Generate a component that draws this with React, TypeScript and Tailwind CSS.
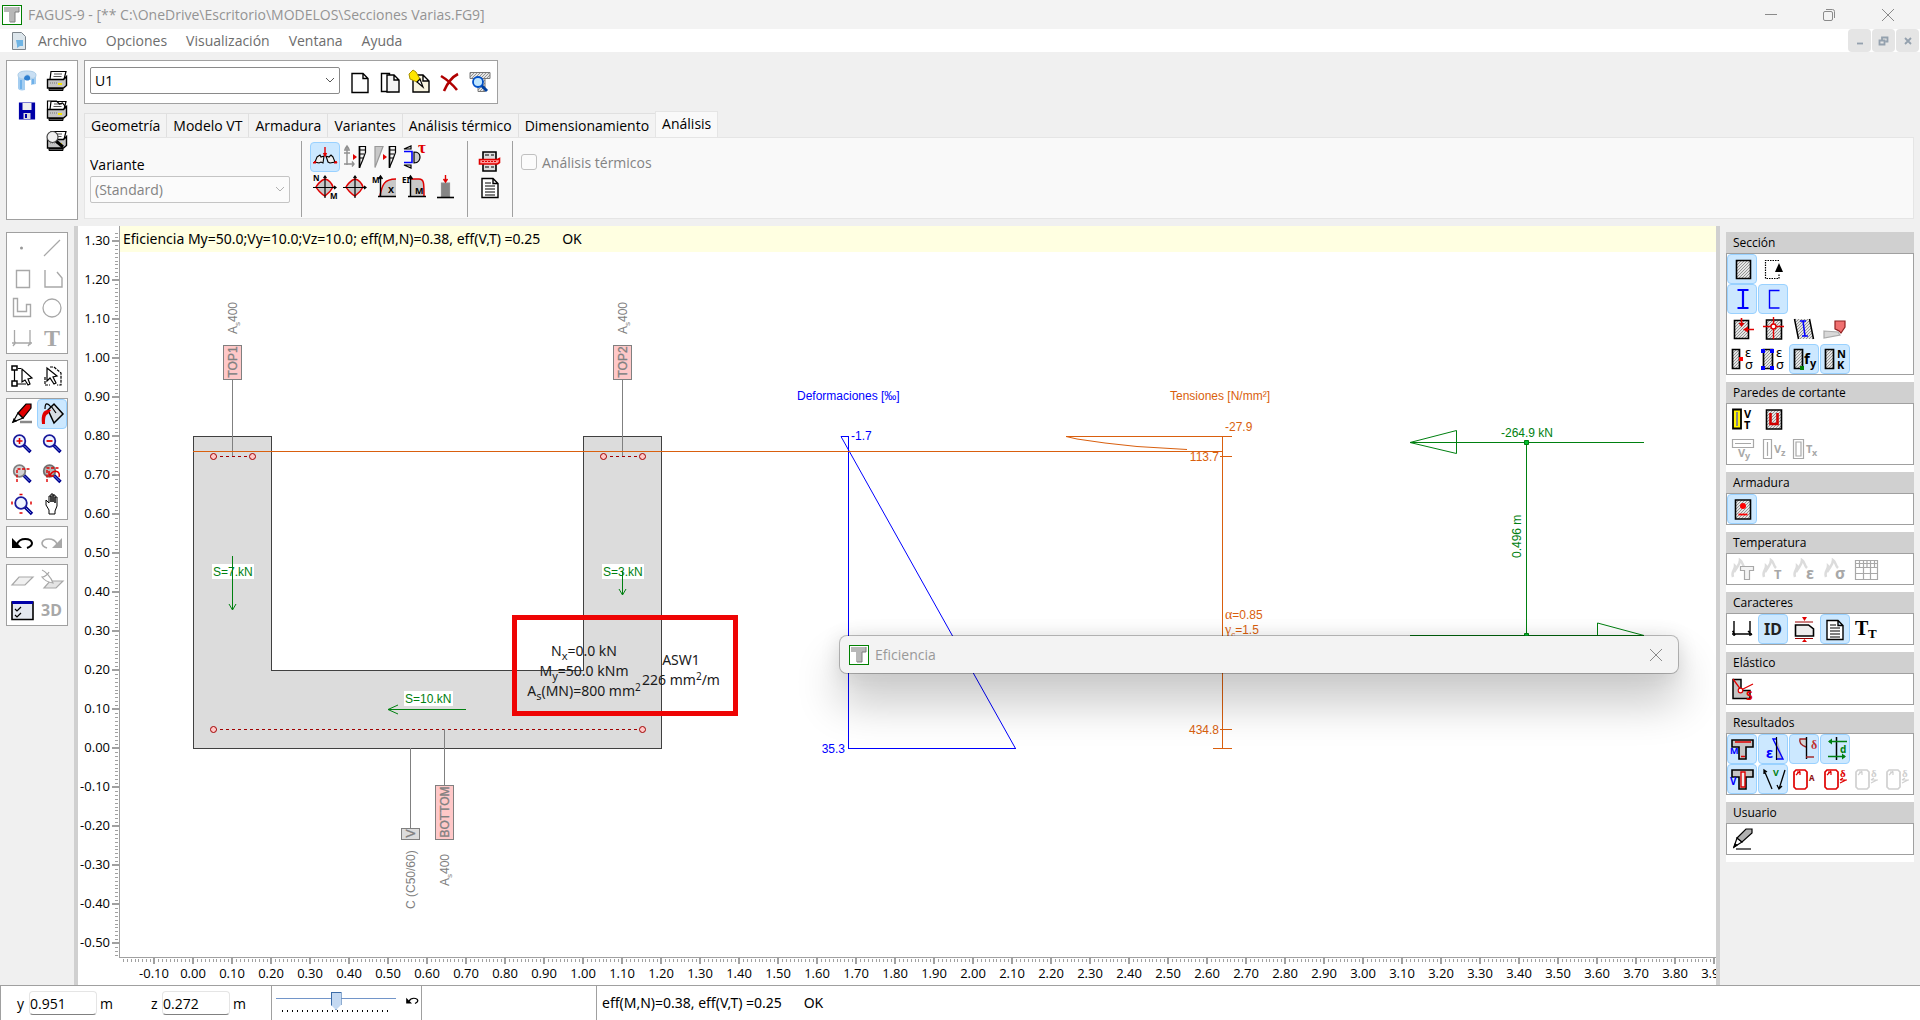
import React, { useState } from 'react';

const BLUE = '#0000ff';
const RED = '#e00000';
const GREEN = '#008010';
const ORANGE = '#d95f0e';
const GREY = '#a8a8a8';
const HATCH = 'url(#hatch)';
const SCALE = 390; // pixels per metre

type IconProps = { children: React.ReactNode };

const Icon = ({ children }: IconProps) => (
  <svg viewBox="0 0 24 24" className="h-6 w-6 shrink-0 overflow-visible" fill="none" stroke="#000" strokeWidth="1.2">
    {children}
  </svg>
);

type GlyphProps = { x: number; y: number; size?: number; fill?: string; serif?: boolean; bold?: boolean; children: string };

const Glyph = ({ x, y, size = 10, fill = '#000', serif, bold = true, children }: GlyphProps) => (
  <text
    x={x}
    y={y}
    fontSize={size}
    fill={fill}
    stroke="none"
    fontWeight={bold ? 700 : 400}
    fontFamily={serif ? '"Liberation Serif", serif' : '"Noto Sans", "DejaVu Sans", sans-serif'}
  >
    {children}
  </text>
);

const Page = () => <path d="M4 3.5h11l5 5v14h-16zM15 3.5v5h5" fill="#fff" strokeWidth="1.4" />;

const Printer = () => (
  <>
    <path d="M6 2.5h15l-2 8h-14z" fill="#fff" />
    <path d="M9 5h8M8.5 7.5h8" stroke="#555" strokeWidth="1" />
    <path d="M2.5 10.5h16l3-3v9l-3 2.5h-16z" fill="#c4c4c4" strokeWidth="1.4" />
    <path d="M4 19.5h14v2h-14z" fill="#555" strokeWidth="1" />
    <path d="M5 14h7" stroke="#777" strokeDasharray="1 1" />
    <path d="M13 15h4" stroke="#f5e400" strokeWidth="2" />
  </>
);

const Lens = ({ cx = 9.5, cy = 9, fill = '#eef4ff', stroke = '#1a1a9c' }) => (
  <>
    <path d={`M${cx + 4} ${cy + 4}l7 7`} stroke="#000090" strokeWidth="3.4" />
    <path d={`M${cx + 5} ${cy + 5}l5 5`} stroke="#6f8fe0" strokeWidth="1" />
    <circle cx={cx} cy={cy} r="5.8" fill={fill} stroke={stroke} strokeWidth="1.8" />
  </>
);

const Flame = () => (
  <path d="M3 20c-2-5 2-7 2-11 1 1 1 2 1 3 2-3 4-5 4-9 3 2 2 5 5 8" stroke="#dcdcdc" strokeWidth="2.5" />
);

const Curve = ({ children }: { children?: React.ReactNode }) => (
  <>
    <path d="M3 12c1-2 5-7 9-8 4 1 7 5 8 8-1 2-4 6-8 9-4-2-8-7-9-9z" fill="#c8c8c8" stroke={RED} strokeWidth="1.5" />
    <path d="M0 12.5h23M12 1v22M10.500 3l1.500-2 1.500 2M21 11l2 1.500-2 1.500" />
    {children}
  </>
);

const Diagram = () => (
  <>
    <path d="M22.500 1.500v6l-3 8-3 7v-21z" fill="#f2f2f2" />
    <path d="M16 5h6M16 9h5M16 13h4" />
    <path d="M16.500 1v22" strokeWidth="1.600" />
    <path d="M10 9v6l4-3z" fill={RED} stroke="none" />
  </>
);

const Card = ({ color, label }: { color: string; label?: boolean }) => (
  <>
    <path d="M4 3h9l2 2v15l-2 2h-9l-2-2v-15z" stroke={color} strokeWidth="1.7" />
    <path d="M4 8l4-4M5 5h3v3" stroke={color} strokeWidth="1.2" />
    {label ? (
      <>
        <Glyph x={17} y={10} size={11} fill={color} serif>δ</Glyph>
        <path d="M17 13h7M17 13l3-2M17 16l6-3" stroke={color} />
      </>
    ) : (
      <Glyph x={17} y={14} size={8} fill="#8c1010">A</Glyph>
    )}
  </>
);

const Beam = () => <path d="M2 3h21v7h-7v12h-7v-12h-7z" fill="#c4c4c4" strokeWidth="1.6" />;

const Column = ({ w = 9 }: { w?: number }) => <path d={`M2.5 2.5h${w}v19h-${w}z`} fill={HATCH} strokeWidth="1.7" />;

const Sheet = ({ children }: IconProps) => (
  <>
    <path d="M5.5 3h15v19h-15z" fill={HATCH} strokeWidth="1.6" />
    {children}
  </>
);

const StressStrain = () => (
  <>
    <Glyph x={15} y={10} size={13} bold={false}>ε</Glyph>
    <Glyph x={15} y={22} size={13} bold={false}>σ</Glyph>
  </>
);

const icons: Record<string, React.ReactNode> = {
  database: (
    <>
      <path d="M3 6c0-3 4-4 9-4s9 1 9 4v9l-5 1v-5l-6-1v11c-4 1-7 0-7-2z" fill="#a4cdf0" stroke="none" />
      <path d="M3 6c0-3 4-4 9-4s9 1 9 4-3 4-6 3c0-5-6-4-6 1-3 0-6-1-6-4z" fill="#c9dff3" stroke="#b0cfe8" strokeWidth="1" />
      <path d="M9 10c0-5 7-5 6 0-1 2-4 2-6 0" fill="#2f7fd0" stroke="none" />
      <path d="M6 11v9M18 10v5" stroke="#6fb1ea" strokeWidth="2" />
    </>
  ),
  printer: <Printer />,
  save: (
    <>
      <path d="M4.5 4h15v16h-15z" fill="#0000a8" stroke="#0000a8" />
      <path d="M7.5 4h9v7h-9z" fill="#eee" stroke="none" />
      <path d="M8.5 14h7v6h-7z" fill="#ddd" stroke="none" />
      <path d="M10 15h2v4h-2z" fill="#0000a8" stroke="none" />
    </>
  ),
  printAll: (
    <>
      <Printer />
      <path d="M2.5 10v-8h9l3 3 3-1 4 5" />
    </>
  ),
  preview: (
    <>
      <Printer />
      <path d="M11 12l7 6" strokeWidth="3" />
      <circle cx="7.5" cy="8" r="5.5" fill="#f0f0f0" stroke="#444" />
    </>
  ),
  newPage: <Page />,
  copyPage: (
    <>
      <path d="M3.5 3.5h8v18h-8z" fill="#fff" strokeWidth="1.4" />
      <path d="M9 5h7l5 5v12h-12zM16 5v5h5" fill="#f4f4f4" strokeWidth="1.4" />
    </>
  ),
  editPage: (
    <>
      <path d="M5 5h10l6 6v11h-16zM15 5v6h6" fill="#f8f4e0" strokeWidth="1.4" />
      <path d="M1 4l4-4 3 2 4 7-3 3-7-3z" fill="#ffe600" stroke="#a89000" strokeWidth="1" />
      <path d="M9 12l3-3 3 8z" fill="#fff" />
    </>
  ),
  remove: <path d="M3 6c5 3 12 9 16 14M20 4c-6 3-11 10-14 17" stroke="#b00000" strokeWidth="2.6" />,
  find: (
    <>
      <path d="M2 2.5h20v6h-20zM10 8.5h7v13h-7z" fill={HATCH} stroke="#777" strokeWidth="1" />
      <path d="M13 15l6 6" stroke="#0040a0" strokeWidth="3" />
      <circle cx="10" cy="12" r="5" fill="#bfe6ff" stroke="#0050c8" strokeWidth="1.8" />
    </>
  ),
  cracked: (
    <>
      <path d="M4 12l3-2 1 2 3-1-1 7-2-1-2 1-4-1zM20 12l-2-2-2 2-3-1 2 6 2 1 5-1z" fill="#eee" strokeWidth="1.1" />
      <path d="M0 18l2-2 1 2zM21 18l2-2 1 2z" stroke={RED} fill={RED} strokeWidth="1" />
      <path d="M12 2v8M10.500 8l1.500 3 1.500-3" stroke={RED} strokeWidth="1.4" />
    </>
  ),
  stress: (
    <>
      <path d="M4 2v18M1 5h6M1 8h6M1 19h10M9 16.500l2 2.500-2 2.500M2 4l2-3 2 3" stroke="#909090" strokeWidth="1.4" />
      <Diagram />
    </>
  ),
  strain: (
    <>
      <path d="M2 1.5h8l-8 21z" fill="#c8c8c8" stroke="#999" />
      <Diagram />
    </>
  ),
  shear: (
    <>
      <path d="M1 4l7-3v3zM1 20l7 0v3z" fill="#ddd" />
      <path d="M1 6.5h8v11h-8" stroke={BLUE} strokeWidth="1.6" />
      <path d="M11 7c5 0 6 3 6 5s-1 6-6 6z" fill="#ccc" />
      <Glyph x={15} y={8} size={17} fill={RED} serif>τ</Glyph>
    </>
  ),
  nm: (
    <Curve>
      <Glyph x={0} y={6} size={8}>N</Glyph>
      <Glyph x={17} y={24} size={8}>M</Glyph>
    </Curve>
  ),
  mm: <Curve />,
  mx: (
    <>
      <path d="M7 21c2-11 4-17 16-17v17z" fill="#c8c8c8" stroke="none" />
      <path d="M7 21c2-11 4-17 16-17" stroke={RED} strokeWidth="1.5" />
      <path d="M7.5 1v21M5 21.5h18M5.500 4l2-3 2 3" strokeWidth="1.4" />
      <Glyph x={-1} y={8} size={8}>M</Glyph>
      <Glyph x={15} y={18} size={9}>X</Glyph>
    </>
  ),
  ei: (
    <>
      <path d="M7 21v-17h10c4 0 4 3 4 17z" fill="#c8c8c8" stroke="none" />
      <path d="M8 4h8c5 0 5 4 5 17" stroke={RED} strokeWidth="1.5" />
      <path d="M7.5 1v21M5 21.5h18M5.500 4l2-3 2 3" strokeWidth="1.4" />
      <Glyph x={-1} y={8} size={8}>EI</Glyph>
      <Glyph x={12} y={19} size={9}>M</Glyph>
    </>
  ),
  load: (
    <>
      <path d="M8.5 8h8v14h-8z" fill="#858585" stroke="#909090" />
      <path d="M4 22.5h17" strokeWidth="1.6" />
      <path d="M12.5 0v6M10.500 4l2 3 2-3" stroke={RED} strokeWidth="1.4" />
    </>
  ),
  rollPrint: (
    <>
      <path d="M5 3h13v19h-13z" fill="#ddd" strokeWidth="1.6" />
      <path d="M7 6h4M13 6h3M7 18h4M13 18h3" />
      <path d="M1.500 10.500h18l2-1v4l-2 1.500h-18z" fill="#ff9c9c" stroke={RED} strokeWidth="1.6" />
      <path d="M4 12.5h14" stroke={RED} strokeDasharray="2 1" />
    </>
  ),
  report: (
    <>
      <Page />
      <path d="M7 8h6M7 11h10M7 14h10M7 17h10M7 20h10" />
    </>
  ),
  point: <circle cx="11.5" cy="12" r="1.5" fill="#999" stroke="none" />,
  line: <path d="M4 20l16-16" stroke={GREY} />,
  rect: <path d="M6.5 4.5h13v17h-13z" stroke={GREY} strokeWidth="1.4" />,
  polygon: <path d="M5 4v17h17v-9l-5-6" stroke={GREY} strokeWidth="1.4" />,
  uShape: <path d="M3.5 2.5h4v13h9v-7h4v12h-17z" stroke={GREY} strokeWidth="1.4" />,
  circle: <circle cx="12" cy="12" r="9" stroke={GREY} strokeWidth="1.3" />,
  dimension: <path d="M4.5 4v15M20 4v15M2 17h20M3 20l3-4M18 20l3-4" stroke={GREY} strokeWidth="1.3" />,
  text: <Glyph x={4} y={20} size={24} fill={GREY} serif>T</Glyph>,
  pick: (
    <>
      <path d="M4.5 5v14M7 20h9M8 4.500h3" />
      <path d="M2 2h5v4h-5zM2 17h5v5h-5z" fill="#fff" strokeWidth="1.5" />
      <path d="M12 5v13l3-2 3 5 2-1-2-5 4-1z" fill="#fff" />
    </>
  ),
  pickArea: (
    <>
      <path d="M5 13v8h5M10 3h4l7 6v12h-4" strokeDasharray="3 1" />
      <path d="M7 4v13l3-3 4 6 2-1-3-6 4-1z" fill="#fff" />
    </>
  ),
  pencil: (
    <>
      <path d="M10 20h12" stroke="#888" strokeWidth="2.5" />
      <path d="M3 20l5-9 5 5z" fill="#f4f4f4" />
      <path d="M8 11l8-9h5v4l-8 10z" fill={RED} />
      <path d="M3 20l1-3 2 2z" fill="#000" />
    </>
  ),
  bucket: (
    <>
      <path d="M8 8l6-6 9 10-9 9z" fill="#d8dde2" strokeWidth="1.5" />
      <path d="M11 5c-4-5-6-4-6 2M11 4l5 7" />
      <path d="M2 22c-1-10 1-15 9-14l-3 4c-3 1-3 5-3 10z" fill={RED} stroke="none" />
    </>
  ),
  zoomIn: (
    <>
      <Lens />
      <path d="M6.500 9h6M9.500 6v6" stroke={RED} strokeWidth="1.6" />
    </>
  ),
  zoomOut: (
    <>
      <Lens />
      <path d="M6.500 9h6" stroke={RED} strokeWidth="1.8" />
    </>
  ),
  zoomArea: (
    <>
      <Lens fill="#d4d4d4" stroke="#808080" />
      <path d="M7 20v-13h13" stroke={RED} strokeDasharray="3 1.5" strokeWidth="1.4" />
    </>
  ),
  zoomPrev: (
    <>
      <Lens fill="#b4b4b4" stroke="#707070" />
      <path d="M7 20v-14h13" stroke={RED} strokeDasharray="3 1.5" strokeWidth="1.4" />
      <path d="M10 13c4-6 11-4 9 2M9 9v5h5" stroke={RED} strokeWidth="1.5" />
    </>
  ),
  zoomAll: (
    <>
      <Lens cx={11} cy={11} />
      <path d="M9.500 2.500h3M9.500 21h3M2 9.500v3M21 9.500v3" stroke={RED} strokeWidth="1.5" />
    </>
  ),
  hand: <path d="M9 22v-4l-3-5v-5l3 3v-7h2v6-8h2v8-7h2v8-6h2v9l-2 5v3z" fill="#fff" strokeWidth="1" />,
  undo: (
    <>
      <path d="M7 14c3-7 14-6 15-1 0 3-2 4-5 5" strokeWidth="2" />
      <path d="M2 8v10h10z" fill="#000" stroke="none" />
    </>
  ),
  redo: (
    <>
      <path d="M17 14c-3-7-14-6-15-1 0 3 2 4 5 5" stroke={GREY} strokeWidth="1.6" />
      <path d="M22 8v10h-10z" fill={GREY} stroke="none" />
    </>
  ),
  plane: <path d="M2 17l7-8h14l-8 8z" stroke={GREY} fill="#f0f0f0" />,
  planeEdit: (
    <>
      <path d="M4 20l6-7h13l-7 7z" stroke={GREY} fill="#e4e4e4" />
      <path d="M2 2c3 1 9 7 11 13-6-1-9-3-11-6 3 0 6-3 7-5" stroke={GREY} fill="#fff" />
    </>
  ),
  options: (
    <>
      <path d="M2 4h21v17.500h-21z" fill="#e4e8f0" strokeWidth="1.6" />
      <path d="M2 4.500h21" stroke="#0000a8" strokeWidth="3" />
      <path d="M5 11l2 2 4-4M5 17l2 2 4-4" />
    </>
  ),
  threeD: <Glyph x={1} y={18} size={16} fill={GREY}>3D</Glyph>,
  solid: <path d="M6.500 3.500h14v18h-14z" fill={HATCH} strokeWidth="1.6" />,
  opening: (
    <>
      <path d="M18 3.500h-13.500v18h13.500v-5" strokeDasharray="1.5 1" />
      <path d="M18 6l4 9h-8z" fill="#000" stroke="none" />
    </>
  ),
  iBeam: <path d="M7.500 3h11M7.500 21h11M13 3v18" stroke={BLUE} strokeWidth="2.2" />,
  channel: <path d="M18.500 3.500h-10v17.500h10" stroke={BLUE} strokeWidth="1.4" />,
  offset: (
    <>
      <path d="M4.500 3.500h14v18h-14z" fill={HATCH} strokeWidth="1.6" />
      <path d="M11.500 1v6M24 12.500h-6" stroke={RED} strokeWidth="1.6" />
      <path d="M8.500 6h6l-3 4zM18 9.500v6l-5-3z" stroke="none" fill={RED} />
    </>
  ),
  centroid: (
    <Sheet>
      <path d="M2 9.500h21M12.500 0v22" stroke={RED} strokeWidth="1.4" />
      <circle cx="12.5" cy="9.5" r="2.5" fill="#fff" stroke={RED} strokeWidth="1.4" />
    </Sheet>
  ),
  bars: (
    <>
      <path d="M2.500 2l4 20h15l-4-20z" fill={HATCH} stroke="none" />
      <path d="M2.500 2l4 20M17.500 2l4 20" strokeWidth="1.5" />
      <path d="M8 4h6M10 19h6M11 4l2 15" stroke={BLUE} strokeWidth="1.6" />
    </>
  ),
  profile: (
    <>
      <path d="M1 14l14 1 2 3-16 3z" fill="#d8d8d8" stroke="#aaa" />
      <path d="M12 4h10v6l-4 6c-2-3-4-3-6-4z" fill="#f07070" stroke="#902020" />
    </>
  ),
  pointLaw: (
    <>
      <Column w={7} />
      <path d="M9 10h4v4h-4z" fill="#f00" stroke="none" />
      <StressStrain />
    </>
  ),
  sectionLaw: (
    <>
      <Column />
      <path d="M0 2h4v4h-4zM9 2h4v4h-4zM0 19h4v4h-4zM9 19h4v4h-4z" fill="#00f" stroke="none" />
      <StressStrain />
    </>
  ),
  strength: (
    <>
      <Column w={8} />
      <path d="M8 19h4v4h-4z" fill="#008000" stroke="none" />
      <Glyph x={12} y={17} size={15}>f</Glyph>
      <Glyph x={18} y={20} size={11}>y</Glyph>
    </>
  ),
  material: (
    <>
      <Column w={8} />
      <Glyph x={14} y={11} size={11}>N</Glyph>
      <Glyph x={14} y={22} size={11}>K</Glyph>
    </>
  ),
  wallVT: (
    <>
      <path d="M3 2.500h8v19h-8z" fill="#fff200" strokeWidth="1.8" />
      <path d="M7 5v14" stroke="#888" strokeWidth="2" />
      <Glyph x={14} y={11} size={11}>V</Glyph>
      <Glyph x={14} y={22} size={11}>T</Glyph>
    </>
  ),
  wallU: (
    <Sheet>
      <path d="M9.500 6v11h7v-11" stroke="#d00000" strokeWidth="2.6" />
    </Sheet>
  ),
  wallVy: (
    <>
      <path d="M2.500 2.500h21v8h-21zM5 6.500h16" stroke={GREY} />
      <Glyph x={8} y={20} size={11} fill={GREY}>V</Glyph>
      <Glyph x={15} y={22} size={9} fill={GREY}>y</Glyph>
    </>
  ),
  wallVz: (
    <>
      <path d="M2.500 2.500h8v19h-8zM6.500 5v14" stroke={GREY} />
      <Glyph x={13} y={16} size={11} fill={GREY}>V</Glyph>
      <Glyph x={20} y={19} size={9} fill={GREY}>z</Glyph>
    </>
  ),
  wallTx: (
    <>
      <path d="M1.500 2.500h10v19h-10zM4 5h5v14h-5z" stroke={GREY} />
      <Glyph x={14} y={16} size={11} fill={GREY}>T</Glyph>
      <Glyph x={20} y={19} size={9} fill={GREY}>x</Glyph>
    </>
  ),
  rebar: (
    <Sheet>
      <circle cx="13" cy="9" r="3" fill="#f00" stroke="none" />
      <path d="M8.500 17.500h9" stroke="#f00" strokeWidth="1.8" />
    </Sheet>
  ),
  fireSection: (
    <>
      <Flame />
      <path d="M10.500 9.500h13v4h-4v9h-5v-9h-4z" fill="#f4f4f4" stroke={GREY} />
    </>
  ),
  fireT: (
    <>
      <Flame />
      <Glyph x={13} y={22} size={13} fill={GREY}>T</Glyph>
    </>
  ),
  fireStrain: (
    <>
      <Flame />
      <Glyph x={14} y={22} size={16} fill={GREY}>ε</Glyph>
    </>
  ),
  fireStress: (
    <>
      <Flame />
      <Glyph x={12} y={22} size={16} fill={GREY}>σ</Glyph>
    </>
  ),
  grid: <path d="M1.500 3.500h22v19h-22zM1.500 6.500h22M1.500 10.500h22M1.500 16.500h22M5.500 3.500v7M9.500 3.500v19M13 3.500v7M16.500 3.500v19M20.500 3.500v7" stroke={GREY} />,
  dimText: <path d="M4 4v15M20 4v15M2 17h20M2.500 14l3 4M18 14l4 4" strokeWidth="1.4" />,
  ident: <Glyph x={3} y={18} size={16} fill="#222">ID</Glyph>,
  pageHeight: (
    <>
      <path d="M3.500 8h13l5 4v7h-18z" fill="#eee" strokeWidth="1.6" />
      <path d="M3 5h18M3 21.500h18" stroke="#900" strokeWidth="1.2" />
      <path d="M10 0h5l-2.500 4zM10 25h5l-2.500-3z" fill={RED} stroke="none" />
    </>
  ),
  fontSize: (
    <>
      <Glyph x={1} y={18} size={20} serif>T</Glyph>
      <Glyph x={14} y={21} size={13} serif>T</Glyph>
    </>
  ),
  elastic: (
    <>
      <path d="M3 2.500h8v11h9v8h-17z" fill="#c4c4c4" strokeWidth="1.5" />
      <path d="M3 2l8 11 12-6" stroke={RED} strokeWidth="1.3" />
      <circle cx="10.5" cy="13.5" r="2.3" fill="#fff" stroke={RED} />
      <Glyph x={16} y={23} size={12} fill={RED}>S</Glyph>
    </>
  ),
  resM: (
    <>
      <Beam />
      <path d="M5 5h16M11 19.500h4" stroke={RED} strokeWidth="1.5" />
      <Glyph x={0} y={17} size={9} fill={BLUE}>M</Glyph>
    </>
  ),
  resStrain: (
    <>
      <path d="M16 2v20h6z" fill="#b8b8c8" stroke="none" />
      <path d="M16 2h-4l10 20h-6" stroke={BLUE} strokeWidth="1.4" />
      <path d="M15.500 0v23" />
      <Glyph x={5} y={21} size={14} fill={BLUE}>ε</Glyph>
    </>
  ),
  resStress: (
    <>
      <path d="M14 2h-6c-1 3 1 6 6 8" fill="#d4d4d4" stroke="#a02020" strokeWidth="1.4" />
      <path d="M14.500 0v22" strokeWidth="1.4" />
      <path d="M14 20h8" stroke="#a02020" strokeWidth="1.4" />
      <Glyph x={19} y={12} size={12} fill="#c03030" serif>δ</Glyph>
    </>
  ),
  resForce: (
    <>
      <path d="M13.500 0v23" strokeWidth="1.5" />
      <path d="M6 4.500h18M5 19.500h17" stroke={GREEN} strokeWidth="1.5" />
      <path d="M5 4.500l4-3v6zM23 19.500l-4-3v6z" fill={GREEN} stroke="none" />
      <Glyph x={17} y={16} size={10} fill={GREEN}>d</Glyph>
    </>
  ),
  resV: (
    <>
      <Beam />
      <path d="M11 5h4v15h-4z" fill="#eee" stroke={RED} strokeWidth="1.4" />
      <Glyph x={0} y={18} size={10} fill={BLUE}>V</Glyph>
    </>
  ),
  resShear: (
    <>
      <path d="M3 3l8 19M3 7v-4l3 2M24 3l-6 19M16 18l2 4 3-3" strokeWidth="1.3" />
      <Glyph x={12} y={9} size={9} fill={GREEN}>V</Glyph>
    </>
  ),
  resA: <Card color={RED} />,
  resDelta: <Card color={RED} label />,
  resDeltaY: <Card color="#d0d0d0" label />,
  resDeltaZ: <Card color="#d0d0d0" label />,
  userPen: (
    <>
      <path d="M6 22h15" />
      <path d="M4 20l3-9 5 4z" fill="#fff" />
      <path d="M7 11l9-9h6v4l-10 9z" fill="#b0b0b0" />
      <path d="M4 20l1-3 2 1z" fill="#000" />
    </>
  ),
};

type ToolProps = { name: string; title: string; active?: boolean };

const Tool = ({ name, title, active }: ToolProps) => (
  <button
    aria-label={title}
    className={
      active
        ? 'flex h-[30px] w-[30px] items-center justify-center rounded-sm border border-[#99d1ff] bg-[#cce8ff]'
        : 'flex h-[30px] w-[30px] items-center justify-center rounded-sm border border-transparent hover:bg-[#e5f3ff]'
    }
  >
    <Icon>{icons[name]}</Icon>
  </button>
);

const Logo = () => (
  <svg viewBox="0 0 20 20" className="h-5 w-5 shrink-0">
    <rect x="0.5" y="0.5" width="19" height="19" fill="#fff" stroke="#008000" />
    <path d="M2 2h15v5h-4v10h-6v-10h-5z" fill="#b8b8b8" />
    <path d="M17 2v5h-4v10h-5" fill="none" stroke="#808080" />
  </svg>
);

const Chevron = ({ muted }: { muted?: boolean }) => (
  <svg viewBox="0 0 10 6" className="pointer-events-none absolute top-2.5 right-[5px] h-1.5 w-2.5" fill="none" stroke={muted ? '#b0b0b0' : '#555'}>
    <path d="M1 1l4 4 4-4" />
  </svg>
);

const TitleBar = () => (
  <header className="flex h-[29px] shrink-0 items-center bg-[#f3f3f3] pr-0.5 pl-0.5 text-[#949494]">
    <Logo />
    <h1 className="ml-1.5 text-[14px]">FAGUS-9 - [** C:\OneDrive\Escritorio\MODELOS\Secciones Varias.FG9]</h1>
    <div className="ml-auto flex">
      <button aria-label="Minimizar" className="flex h-7 w-[58px] items-center justify-center">
        <svg viewBox="0 0 12 12" className="h-3 w-3" stroke="#8a8a8a"><path d="M0 5.5h12" /></svg>
      </button>
      <button aria-label="Restaurar" className="flex h-7 w-[58px] items-center justify-center">
        <svg viewBox="0 0 12 12" className="h-3 w-3" fill="none" stroke="#8a8a8a">
          <rect x="0.5" y="2.5" width="9" height="9" rx="1.5" />
          <path d="M3 .5h6.500a2 2 0 0 1 2 2v6.500" />
        </svg>
      </button>
      <button aria-label="Cerrar" className="flex h-7 w-[60px] items-center justify-center">
        <svg viewBox="0 0 12 12" className="h-3 w-3" stroke="#8a8a8a"><path d="M0 0l12 12M12 0l-12 12" /></svg>
      </button>
    </div>
  </header>
);

const menus = ['Archivo', 'Opciones', 'Visualización', 'Ventana', 'Ayuda'];

const documentButtons = [
  { title: 'Minimizar documento', d: 'M3 8.5h6' },
  { title: 'Restaurar documento', d: 'M1.5 5.5h5v4h-5zM4 5v-2.500h5.500v4h-2' },
  { title: 'Cerrar documento', d: 'M3 3l6 6M9 3l-6 6' },
];

const MenuBar = () => (
  <nav className="flex h-[23px] shrink-0 items-center bg-white pl-3 text-[14px] text-[#6d6d6d]">
    <svg viewBox="0 0 14 18" className="mr-3 h-[18px] w-[14px]">
      <path d="M.5.5h9l4 4v13h-13z" fill="#dde6ec" stroke="#7d858c" />
      <path d="M4 8h7v6h-3l-3 2v-3z" fill="#6fb4e4" />
    </svg>
    <div className="flex gap-[19px]">
      {menus.map((m) => (
        <button key={m}>{m}</button>
      ))}
    </div>
    <div className="ml-auto flex gap-px pr-px">
      {documentButtons.map((b) => (
        <button key={b.title} aria-label={b.title} className="flex h-[23px] w-[23px] items-center justify-center rounded-sm bg-[#e5e5e5]">
          <svg viewBox="0 0 12 12" className="h-3 w-3" fill="none" stroke="#94a1ae" strokeWidth="1.8"><path d={b.d} /></svg>
        </button>
      ))}
    </div>
  </nav>
);

const tabs = ['Geometría', 'Modelo VT', 'Armadura', 'Variantes', 'Análisis térmico', 'Dimensionamiento', 'Análisis'];

const ribbonTools: ToolProps[] = [
  { name: 'cracked', title: 'Eficiencia', active: true },
  { name: 'stress', title: 'Tensiones' },
  { name: 'strain', title: 'Deformaciones' },
  { name: 'shear', title: 'Tensiones tangenciales' },
];

const ribbonCurves: ToolProps[] = [
  { name: 'nm', title: 'Diagrama N-M' },
  { name: 'mm', title: 'Diagrama My-Mz' },
  { name: 'mx', title: 'Momento-curvatura' },
  { name: 'ei', title: 'Rigidez' },
  { name: 'load', title: 'Carga última' },
];

const Ribbon = () => (
  <div className="flex h-[168px] shrink-0 pt-2 pr-1.5 pl-1.5">
    <div className="grid h-[160px] w-[72px] shrink-0 grid-cols-2 content-start border border-[#a0a0a0] bg-white p-[5px]">
      <Tool name="database" title="Base de datos" />
      <Tool name="printer" title="Imprimir" />
      <Tool name="save" title="Guardar" />
      <Tool name="printAll" title="Imprimir todo" />
      <span />
      <Tool name="preview" title="Vista previa" />
    </div>
    <div className="ml-1.5 flex min-w-0 flex-1 flex-col">
      <div className="flex h-11 w-[414px] items-start border border-[#a0a0a0] bg-white pt-1.5 pl-[5px]">
        <div className="relative mr-[5px] h-[27px] w-[250px]">
          <select aria-label="Sección activa" className="h-full w-full appearance-none rounded-xs border border-[#8a8a8a] bg-white px-1 text-[14px] leading-5">
            <option>U1</option>
          </select>
          <Chevron />
        </div>
        <Tool name="newPage" title="Nueva sección" />
        <Tool name="copyPage" title="Copiar sección" />
        <Tool name="editPage" title="Editar sección" />
        <Tool name="remove" title="Eliminar sección" />
        <Tool name="find" title="Buscar sección" />
      </div>
      <div className="mt-[7px] flex h-[26px] items-end text-[14px]" role="tablist">
        {tabs.map((t) => (
          <button
            key={t}
            role="tab"
            aria-selected={t === 'Análisis'}
            className={
              t === 'Análisis'
                ? 'h-[26px] border-x border-t border-[#e5e5e5] bg-[#f9f9f9] px-1.5 pb-0.5'
                : 'h-6 border-t border-l border-[#e0e0e0] bg-[#f3f3f3] px-1.5'
            }
          >
            {t}
          </button>
        ))}
      </div>
      <div className="flex h-[82px] border border-[#e5e5e5] bg-[#f9f9f9] pt-[3px]">
        <div className="w-[216px] pt-3.5 pl-[5px]">
          <label htmlFor="variant" className="block h-[21px] text-[14px] leading-5">Variante</label>
          <div className="relative h-[27px] w-[200px]">
            <select id="variant" disabled className="h-full w-full appearance-none rounded-xs border border-[#c4c4c4] bg-[#fbfbfb] px-1 text-[14px] leading-5 text-[#838383]">
              <option>(Standard)</option>
            </select>
            <Chevron muted />
          </div>
        </div>
        <div className="h-[76px] w-[166px] border-l border-[#a0a0a0] pt-px pl-2">
          <div className="flex">
            {ribbonTools.map((t) => <Tool key={t.name} {...t} />)}
          </div>
          <div className="flex">
            {ribbonCurves.map((t) => <Tool key={t.name} {...t} />)}
          </div>
        </div>
        <div className="flex h-[76px] w-[45px] flex-col border-l border-[#a0a0a0] pt-[5px] pl-[7px]">
          <Tool name="rollPrint" title="Imprimir resultados" />
          <div className="-mt-1">
            <Tool name="report" title="Informe" />
          </div>
        </div>
        <div className="h-[76px] border-l border-[#a0a0a0] pt-[11px] pl-2">
          <label className="flex h-5 items-center gap-[5px] text-[14px] text-[#838383]">
            <input type="checkbox" disabled className="h-4 w-4 appearance-none rounded-[3px] border border-[#c0c0c0] bg-[#fbfbfb]" />
            Análisis térmicos
          </label>
        </div>
      </div>
    </div>
  </div>
);

const toolBoxes: ToolProps[][] = [
  [
    { name: 'point', title: 'Punto' },
    { name: 'line', title: 'Línea' },
    { name: 'rect', title: 'Rectángulo' },
    { name: 'polygon', title: 'Polígono' },
    { name: 'uShape', title: 'Perfil abierto' },
    { name: 'circle', title: 'Círculo' },
    { name: 'dimension', title: 'Cota' },
    { name: 'text', title: 'Texto' },
  ],
  [
    { name: 'pick', title: 'Seleccionar' },
    { name: 'pickArea', title: 'Seleccionar área' },
  ],
  [
    { name: 'pencil', title: 'Dibujar' },
    { name: 'bucket', title: 'Rellenar', active: true },
    { name: 'zoomIn', title: 'Acercar' },
    { name: 'zoomOut', title: 'Alejar' },
    { name: 'zoomArea', title: 'Ventana de zoom' },
    { name: 'zoomPrev', title: 'Zoom anterior' },
    { name: 'zoomAll', title: 'Ver todo' },
    { name: 'hand', title: 'Desplazar' },
  ],
  [
    { name: 'undo', title: 'Deshacer' },
    { name: 'redo', title: 'Rehacer' },
  ],
  [
    { name: 'plane', title: 'Plano' },
    { name: 'planeEdit', title: 'Editar plano' },
    { name: 'options', title: 'Opciones' },
    { name: 'threeD', title: 'Vista 3D' },
  ],
];

const ToolStrip = () => (
  <aside className="flex w-[74px] shrink-0 flex-col gap-1.5 pt-1.5 pl-1.5">
    {toolBoxes.map((box, i) => (
      <div key={i} className="grid w-[62px] grid-cols-2 border border-[#a0a0a0] bg-white">
        {box.map((t) => <Tool key={t.name} {...t} />)}
      </div>
    ))}
  </aside>
);

const groups: { title: string; rows: ToolProps[][] }[] = [
  {
    title: 'Sección',
    rows: [
      [{ name: 'solid', title: 'Cuerpo', active: true }, { name: 'opening', title: 'Hueco' }],
      [{ name: 'iBeam', title: 'Perfil I', active: true }, { name: 'channel', title: 'Perfil C', active: true }],
      [
        { name: 'offset', title: 'Recubrimiento' },
        { name: 'centroid', title: 'Centro de gravedad' },
        { name: 'bars', title: 'Barras' },
        { name: 'profile', title: 'Perfil' },
      ],
      [
        { name: 'pointLaw', title: 'Ley del punto' },
        { name: 'sectionLaw', title: 'Ley de la sección' },
        { name: 'strength', title: 'Resistencia', active: true },
        { name: 'material', title: 'Material', active: true },
      ],
    ],
  },
  {
    title: 'Paredes de cortante',
    rows: [
      [{ name: 'wallVT', title: 'Paredes VT' }, { name: 'wallU', title: 'Estribos' }],
      [{ name: 'wallVy', title: 'Vy' }, { name: 'wallVz', title: 'Vz' }, { name: 'wallTx', title: 'Tx' }],
    ],
  },
  { title: 'Armadura', rows: [[{ name: 'rebar', title: 'Armadura', active: true }]] },
  {
    title: 'Temperatura',
    rows: [[
      { name: 'fireSection', title: 'Sección térmica' },
      { name: 'fireT', title: 'Temperatura' },
      { name: 'fireStrain', title: 'Deformación térmica' },
      { name: 'fireStress', title: 'Tensión térmica' },
      { name: 'grid', title: 'Tabla' },
    ]],
  },
  {
    title: 'Caracteres',
    rows: [[
      { name: 'dimText', title: 'Cotas' },
      { name: 'ident', title: 'Identificadores', active: true },
      { name: 'pageHeight', title: 'Altura' },
      { name: 'report', title: 'Textos', active: true },
      { name: 'fontSize', title: 'Tamaño de letra' },
    ]],
  },
  { title: 'Elástico', rows: [[{ name: 'elastic', title: 'Valores elásticos' }]] },
  {
    title: 'Resultados',
    rows: [
      [
        { name: 'resM', title: 'Momentos', active: true },
        { name: 'resStrain', title: 'Deformaciones', active: true },
        { name: 'resStress', title: 'Tensiones', active: true },
        { name: 'resForce', title: 'Resultantes', active: true },
      ],
      [
        { name: 'resV', title: 'Cortante', active: true },
        { name: 'resShear', title: 'Bielas', active: true },
        { name: 'resA', title: 'Áreas' },
        { name: 'resDelta', title: 'Tensión de armadura' },
        { name: 'resDeltaY', title: 'Tensión y' },
        { name: 'resDeltaZ', title: 'Tensión z' },
      ],
    ],
  },
  { title: 'Usuario', rows: [[{ name: 'userPen', title: 'Usuario' }]] },
];

const SidePanel = () => (
  <aside className="w-[200px] shrink-0 pt-1.5 pr-1.5 pl-1.5">
    {groups.map((g) => (
      <section key={g.title} className="bg-white pb-[7px]">
        <h2 className="h-[21px] bg-[#d0d0d0] pl-[7px] text-[12px] leading-[22px]">{g.title}</h2>
        <div className="border border-[#a0a0a0] bg-white">
          {g.rows.map((row, i) => (
            <div key={i} className="flex gap-px">
              {row.map((t) => <Tool key={t.name} {...t} />)}
            </div>
          ))}
        </div>
      </section>
    ))}
  </aside>
);

const range = (from: number, to: number) => Array.from({ length: to - from + 1 }, (_, i) => from + i);

const VerticalRuler = () => {
  const y = (cm: number) => 522 - (cm * SCALE) / 100;
  return (
    <svg className="h-full w-[42px] shrink-0 bg-white" shapeRendering="crispEdges">
      <path d="M41.5 0v4000" stroke="#a0a0a0" />
      {range(-53, 132).map((cm) => (
        <path key={cm} d={`M${cm % 10 ? 37 : 34} ${Math.round(y(cm))}h${cm % 10 ? 3 : 7}`} stroke="#a0a0a0" strokeWidth={cm % 10 ? 1 : 2} />
      ))}
      {range(-5, 13).map((d) => (
        <text key={d} x="32" y={y(d * 10) + 4} textAnchor="end" fontSize="13">{(d / 10).toFixed(2)}</text>
      ))}
    </svg>
  );
};

const HorizontalRuler = () => {
  const x = (cm: number) => 115 + (cm * SCALE) / 100;
  return (
    <svg className="h-7 w-full shrink-0 bg-white" shapeRendering="crispEdges">
      <path d="M41 .5h4000" stroke="#a0a0a0" />
      {range(-18, 400).map((cm) => (
        <path key={cm} d={`M${Math.round(x(cm))} ${cm % 10 ? 2 : 1}v${cm % 10 ? 3 : 6}`} stroke="#a0a0a0" strokeWidth={cm % 10 ? 1 : 2} />
      ))}
      {range(-1, 39).map((d) => (
        <text key={d} x={x(d * 10)} y="21" textAnchor="middle" fontSize="13">{(d / 10).toFixed(2)}</text>
      ))}
    </svg>
  );
};

const px = (m: number) => Math.round(73 + m * SCALE) + 0.5;
const py = (m: number) => Math.round(496 - m * SCALE) + 0.5;

const outline = [[0, 0.8], [0.2, 0.8], [0.2, 0.2], [1, 0.2], [1, 0.8], [1.2, 0.8], [1.2, 0], [0, 0]];

const Rebar = ({ from, to, z }: { from: number; to: number; z: number }) => (
  <g stroke="#a00000" fill="#ffc8c8">
    <path d={`M${px(from)} ${py(z)}H${px(to)}`} strokeDasharray="3 3" shapeRendering="crispEdges" />
    <circle cx={px(from)} cy={py(z)} r="3" />
    <circle cx={px(to)} cy={py(z)} r="3" />
  </g>
);

type TagProps = { x: number; top: number; height: number; label: string; fill: string };

const Tag = ({ x, top, height, label, fill }: TagProps) => (
  <>
    <rect x={x - 9} y={top} width="18" height={height} fill={fill} stroke="#808080" shapeRendering="crispEdges" />
    <text transform={`translate(${x + 4} ${top + height - 2}) rotate(-90)`} fill="#808080" stroke="#808080" strokeWidth="0.3">{label}</text>
  </>
);

const Steel = ({ x, y }: { x: number; y: number }) => (
  <text transform={`translate(${x + 4} ${y}) rotate(-90)`} fill="#808080">
    A<tspan fontSize="8" dy="3">s</tspan><tspan dy="-3">400</tspan>
  </text>
);

const Force = ({ x, y, w, label }: { x: number; y: number; w: number; label: string }) => (
  <>
    <rect x={x} y={y} width={w} height="15" fill="#fff" />
    <text x={x + 1} y={y + 12} fill={GREEN}>{label}</text>
  </>
);

const Drawing = () => (
  <svg className="block h-full w-full" fill="none" fontSize="12" fontFamily='"Liberation Sans", Arial, sans-serif'>
    <polygon
      points={outline.map(([a, b]) => `${px(a)},${py(b)}`).join(' ')}
      fill="#dcdcdc"
      stroke="#404040"
      shapeRendering="crispEdges"
    />
    <Rebar from={0.05} to={0.15} z={0.75} />
    <Rebar from={1.05} to={1.15} z={0.75} />
    <Rebar from={0.05} to={1.15} z={0.05} />

    <path d="M112.5 127v77M502.5 127v77M290.5 496v80M324.5 477v56" stroke="#808080" shapeRendering="crispEdges" />
    <Tag x={112.5} top={93.5} height={34} label="TOP1" fill="#ffc8c8" />
    <Tag x={502.5} top={93.5} height={34} label="TOP2" fill="#ffc8c8" />
    <Tag x={290.5} top={576.5} height={11} label="V" fill="#dcdcdc" />
    <Tag x={324.5} top={533.5} height={54} label="BOTTOM" fill="#ffc8c8" />
    <Steel x={112.5} y={82} />
    <Steel x={502.5} y={82} />
    <Steel x={324.5} y={634} />
    <text transform="translate(295 657) rotate(-90)" fill="#808080">C (C50/60)</text>

    <Force x={92} y={312} w={42} label="S=7.kN" />
    <Force x={482} y={312} w={42} label="S=3.kN" />
    <Force x={284} y={439} w={49} label="S=10.kN" />
    <g stroke={GREEN}>
      <path d="M112.5 304v54M109 352l3.5 6 3.5-6" />
      <path d="M502.5 319v24M499 337l3.5 6 3.5-6" />
      <path d="M346 457.5h-78M278 453l-10 4.5 10 4.5" />
    </g>

    <g fill="#1a1a1a" fontSize="14" textAnchor="middle" fontFamily='"Noto Sans", "Open Sans", sans-serif'>
      <text x="464" y="404">N<tspan fontSize="11" dy="4">x</tspan><tspan dy="-4">=0.0 kN</tspan></text>
      <text x="464" y="424">M<tspan fontSize="11" dy="4">y</tspan><tspan dy="-4">=50.0 kNm</tspan></text>
      <text x="464" y="444">A<tspan fontSize="11" dy="4">s</tspan><tspan dy="-4">(MN)=800 mm</tspan><tspan fontSize="10" dy="-5">2</tspan></text>
      <text x="561" y="413">ASW1</text>
      <text x="561" y="433">226 mm<tspan fontSize="10" dy="-5">2</tspan><tspan dy="5">/m</tspan></text>
    </g>
    <rect x="394.5" y="365.5" width="221" height="96" stroke="#ee0404" strokeWidth="5" />

    <g stroke={BLUE}>
      <path d="M728.5 184v312.5h167" shapeRendering="crispEdges" />
      <path d="M728.5 184.5h-7.500L895.5 496.5" />
    </g>
    <g fill={BLUE}>
      <text x="677" y="148">Deformaciones [‰]</text>
      <text x="731" y="188">-1.7</text>
      <text x="725" y="501" textAnchor="end">35.3</text>
    </g>

    <g stroke={ORANGE}>
      <path d="M73 199.5h1029M946 184.5h166M1102.5 184v312M1100 204.5h12M1100 477.5h12M1093 496.5h19" shapeRendering="crispEdges" />
      <path d="M946 184.5l11 2.5 28 4 32 3.5 50 3" />
    </g>
    <g fill={ORANGE}>
      <text x="1050" y="148">Tensiones [N/mm²]</text>
      <text x="1105" y="179">-27.9</text>
      <text x="1099" y="209" textAnchor="end">113.7</text>
      <text x="1099" y="482" textAnchor="end">434.8</text>
      <text x="1105" y="367"><tspan fontFamily='"Liberation Serif", serif' fontSize="14">α</tspan>=0.85</text>
      <text x="1105" y="382"><tspan fontFamily='"Liberation Serif", serif' fontSize="14">γ</tspan><tspan fontSize="8" dy="3">c</tspan><tspan dy="-3">=1.5</tspan></text>
    </g>

    <g stroke={GREEN}>
      <path d="M1290 190.5h234M1406.5 190v193M1290 383.5h234" shapeRendering="crispEdges" />
      <path d="M1290 190.5l46.5-12v23zM1524 383.5l-46.5-12.5v12.5" />
      <path d="M1404.5 188.5h4v4h-4zM1404.5 381.5h4v4h-4z" fill="#00c030" />
    </g>
    <text x="1381" y="185" fill={GREEN}>-264.9 kN</text>
    <text transform="translate(1401 306) rotate(-90)" fill={GREEN}>0.496 m</text>
  </svg>
);

const EfficiencyDialog = ({ onClose }: { onClose: () => void }) => (
  <div
    role="dialog"
    aria-label="Eficiencia"
    className="absolute top-[383px] left-[719px] flex h-[39px] w-[840px] items-center rounded-lg border border-black/25 bg-[#f3f3f3] bg-clip-padding pr-3.5 pl-[9px] shadow-[0_28px_44px_rgba(0,0,0,0.24),0_2px_20px_rgba(0,0,0,0.12)]"
  >
    <Logo />
    <span className="ml-1.5 text-[14px] text-[#999999]">Eficiencia</span>
    <button aria-label="Cerrar Eficiencia" className="ml-auto flex h-4 w-4 items-center justify-center" onClick={onClose}>
      <svg viewBox="0 0 12 12" className="h-3 w-3" stroke="#8a8a8a"><path d="M0 0l12 12M12 0l-12 12" /></svg>
    </button>
  </div>
);

const Workspace = () => {
  const [dialogOpen, setDialogOpen] = useState(true);

  return (
    <main className="flex min-w-0 flex-1 flex-col overflow-hidden border-x-4 border-[#d0d0d0] bg-white">
      <div className="flex min-h-0 flex-1">
        <VerticalRuler />
        <div className="flex min-w-0 flex-1 flex-col">
          <p className="h-[26px] shrink-0 bg-[#ffffe1] pl-[3px] font-['Noto_Sans','Open_Sans',sans-serif] text-[14px] leading-[26px] whitespace-pre">
            Eficiencia My=50.0;Vy=10.0;Vz=10.0; eff(M,N)=0.38, eff(V,T) =0.25{'      '}OK
          </p>
          <div className="relative min-h-0 flex-1 overflow-hidden">
            <Drawing />
            {dialogOpen && <EfficiencyDialog onClose={() => setDialogOpen(false)} />}
          </div>
        </div>
      </div>
      <HorizontalRuler />
    </main>
  );
};

const StatusBar = () => {
  const [y, setY] = useState('0.951');
  const [z, setZ] = useState('0.272');
  const [zoom, setZoom] = useState(50);

  return (
    <footer className="flex h-[35px] shrink-0 border-t border-[#a0a0a0] bg-white text-[14px]">
      <div className="flex w-[271px] items-center border-l border-[#a0a0a0] pl-4">
        <label htmlFor="coord-y" className="w-3">y</label>
        <input
          id="coord-y"
          className="h-6 w-[68px] rounded-sm border border-[#e5e5e5] border-b-[#808080] bg-white text-[14px]"
          value={y}
          onChange={(e) => setY(e.target.value)}
        />
        <span className="w-[54px] pl-[3px]">m</span>
        <label htmlFor="coord-z" className="w-[11px]">z</label>
        <input
          id="coord-z"
          className="h-6 w-[68px] rounded-sm border border-[#e5e5e5] border-b-[#808080] bg-white text-[14px]"
          value={z}
          onChange={(e) => setZ(e.target.value)}
        />
        <span className="pl-[3px]">m</span>
      </div>
      <div className="flex w-[150px] border-l border-[#a0a0a0] pt-1.5 pl-1">
        <div className="w-[120px]">
          <input
            type="range"
            aria-label="Escala"
            value={zoom}
            onChange={(e) => setZoom(Number(e.target.value))}
            className="block h-[18px] w-full appearance-none bg-[linear-gradient(#7295c9,#7295c9)] bg-[length:100%_1px] bg-[position:0_6px] bg-no-repeat [&::-webkit-slider-thumb]:h-[18px] [&::-webkit-slider-thumb]:w-[11px] [&::-webkit-slider-thumb]:appearance-none [&::-webkit-slider-thumb]:border [&::-webkit-slider-thumb]:border-[#3d6da8] [&::-webkit-slider-thumb]:bg-[#c4d9f2] [&::-webkit-slider-thumb]:[clip-path:polygon(0_0,100%_0,100%_70%,50%_100%,0_70%)]"
          />
          <svg className="h-1 w-full" shapeRendering="crispEdges">
            <path d="M6 1h110" stroke="#000" strokeWidth="2" strokeDasharray="1 4" />
          </svg>
        </div>
        <button aria-label="Restablecer escala" className="ml-2 flex h-4 w-4 items-center justify-center">
          <svg viewBox="0 0 24 24" className="h-3.5 w-3.5" fill="none" stroke="#000">{icons.undo}</svg>
        </button>
      </div>
      <div className="w-[175px] border-l border-[#a0a0a0]" />
      <p className="flex-1 border-l border-[#a0a0a0] pl-[5px] font-['Noto_Sans','Open_Sans',sans-serif] leading-[33px] whitespace-pre">
        eff(M,N)=0.38, eff(V,T) =0.25{'      '}OK
      </p>
    </footer>
  );
};

const App = () => (
  <div className="flex h-screen min-h-[760px] flex-col overflow-hidden bg-[#f0f0f0] font-['Open_Sans','Noto_Sans',sans-serif] text-black">
    {/* shared fill, must stay rendered for url(#hatch) to resolve */}
    <svg className="absolute h-0 w-0">
      <defs>
        <pattern id="hatch" width="3" height="3" patternUnits="userSpaceOnUse">
          <rect width="3" height="3" fill="#e4e4e4" />
          <path d="M-1 1l2-2M0 3l3-3M2 4l2-2" stroke="#808080" strokeWidth="0.8" />
        </pattern>
      </defs>
    </svg>
    <TitleBar />
    <MenuBar />
    <Ribbon />
    <div className="mt-1.5 flex min-h-0 flex-1">
      <ToolStrip />
      <Workspace />
      <SidePanel />
    </div>
    <StatusBar />
  </div>
);

export default App;
